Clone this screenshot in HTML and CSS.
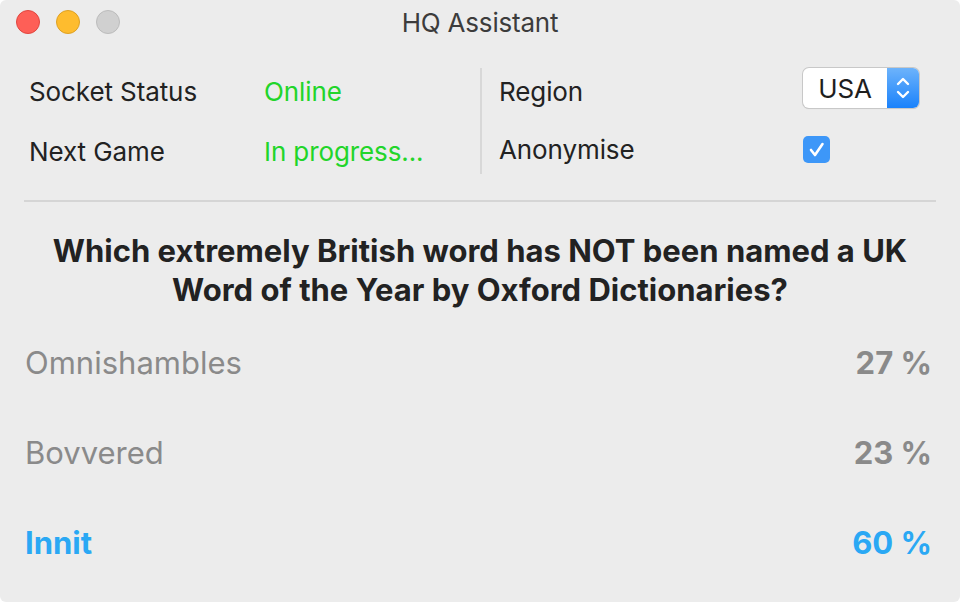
FILE: index.html
```html
<!DOCTYPE html>
<html>
<head>
<meta charset="utf-8">
<link rel="stylesheet" href="styles.css">
</head>
<body>
<div class="window">
  <div class="titlebar">
    <div class="lights">
      <span class="light red"></span>
      <span class="light yellow"></span>
      <span class="light gray"></span>
    </div>
    <div class="title">HQ Assistant</div>
    <div></div>
  </div>

  <div class="settings">
    <div class="col left">
      <div class="row"><span class="label">Socket Status</span><span class="value">Online</span></div>
      <div class="row"><span class="label">Next Game</span><span class="value">In progress...</span></div>
    </div>
    <div class="divider"></div>
    <div class="col right">
      <div class="row"><span class="label">Region</span>
        <div class="popup"><span class="popup-text">USA</span>
          <span class="popup-arrows">
            <svg width="18" height="28" viewBox="0 0 18 28"><path d="M4 10 L9 5 L14 10 M4 18 L9 23 L14 18" fill="none" stroke="#fff" stroke-width="2.4" stroke-linecap="round" stroke-linejoin="round"/></svg>
          </span>
        </div>
      </div>
      <div class="row"><span class="label">Anonymise</span>
        <span class="checkbox"><svg width="27" height="27" viewBox="0 0 27 27"><path d="M8 14 L12 19 L19.5 8" fill="none" stroke="#fff" stroke-width="2.6" stroke-linecap="round" stroke-linejoin="round"/></svg></span>
      </div>
    </div>
  </div>

  <div class="rule"></div>

  <div class="question">Which extremely British word has NOT been named a UK Word of the Year by Oxford Dictionaries?</div>

  <div class="answers">
    <div class="answer"><span class="name">Omnishambles</span><span class="pct">27 %</span></div>
    <div class="answer"><span class="name">Bovvered</span><span class="pct">23 %</span></div>
    <div class="answer best"><span class="name">Innit</span><span class="pct">60 %</span></div>
  </div>
</div>
</body>
</html>
```

FILE: styles.css
```css
* { box-sizing: border-box; }
html, body { margin: 0; padding: 0; background: #fff; }
body { font-family: Inter, "Noto Sans", sans-serif; }

.window {
  width: 960px;
  height: 602px;
  background: #ececec;
  border-radius: 6px;
  overflow: hidden;
  color: #222;
}

.titlebar {
  height: 44px;
  display: grid;
  grid-template-columns: 1fr auto 1fr;
  align-items: center;
}
.lights {
  display: flex;
  gap: 16px;
  padding-left: 16px;
}
.light {
  width: 24px;
  height: 24px;
  border-radius: 50%;
  display: block;
}
.light.red { background: #fe5f57; border: 1px solid #e1463f; }
.light.yellow { background: #febc2e; border: 1px solid #dea123; }
.light.gray { background: #d0d0d0; border: 1px solid #bcbcbc; }
.title {
  font-size: 26px;
  color: #3c3c3c;
  letter-spacing: -0.2px;
}

.settings {
  display: flex;
  padding: 24px 24px 0 24px;
  height: 150px;
}
.col { display: flex; flex-direction: column; }
.col.left { width: 456px; padding-left: 5px; }
.col.right { flex: 1; padding-left: 17px; }
.divider {
  width: 2px;
  height: 106px;
  background: #d8d8d8;
}
.row {
  display: flex;
  align-items: center;
  height: 46px;
  font-size: 26px;
  letter-spacing: -0.1px;
}
.left .row + .row { margin-top: 14px; }
.right .row + .row { margin-top: 12px; }
.left .label { width: 235px; }
.right .label { width: 304px; }
.value { color: #22d52a; }

.popup {
  align-self: flex-start;
  width: 116px;
  height: 40px;
  display: flex;
  border-radius: 6px;
  background: #fff;
  box-shadow: 0 0 0 1px #c8c8c8, 0 1px 1px rgba(0,0,0,0.15);
  overflow: hidden;
}
.popup-text {
  flex: 1;
  display: flex;
  align-items: center;
  justify-content: center;
  font-size: 26px;
  color: #1e1e1e;
}
.popup-arrows {
  width: 32px;
  display: flex;
  align-items: center;
  justify-content: center;
  background: linear-gradient(#6db3fb, #1a82fb);
}
.checkbox {
  width: 27px;
  height: 27px;
  border-radius: 5px;
  background: #3d97f8;
  display: block;
}
.checkbox svg { display: block; }

.rule {
  margin: 6px 24px 0 24px;
  height: 2px;
  background: #d5d5d5;
}

.question {
  margin-top: 29px;
  padding: 0 20px;
  text-align: center;
  font-weight: 700;
  font-size: 31px;
  line-height: 39px;
  color: #222;
}

.answers {
  margin-top: 8px;
  padding: 0 28px 0 25px;
}
.answer {
  display: flex;
  justify-content: space-between;
  align-items: center;
  height: 90px;
  font-size: 31px;
  color: #8a8a8a;
}
.answer .pct { font-weight: 700; }
.answer.best { color: #2aa8f4; }
.answer.best .name { font-weight: 700; }
```
